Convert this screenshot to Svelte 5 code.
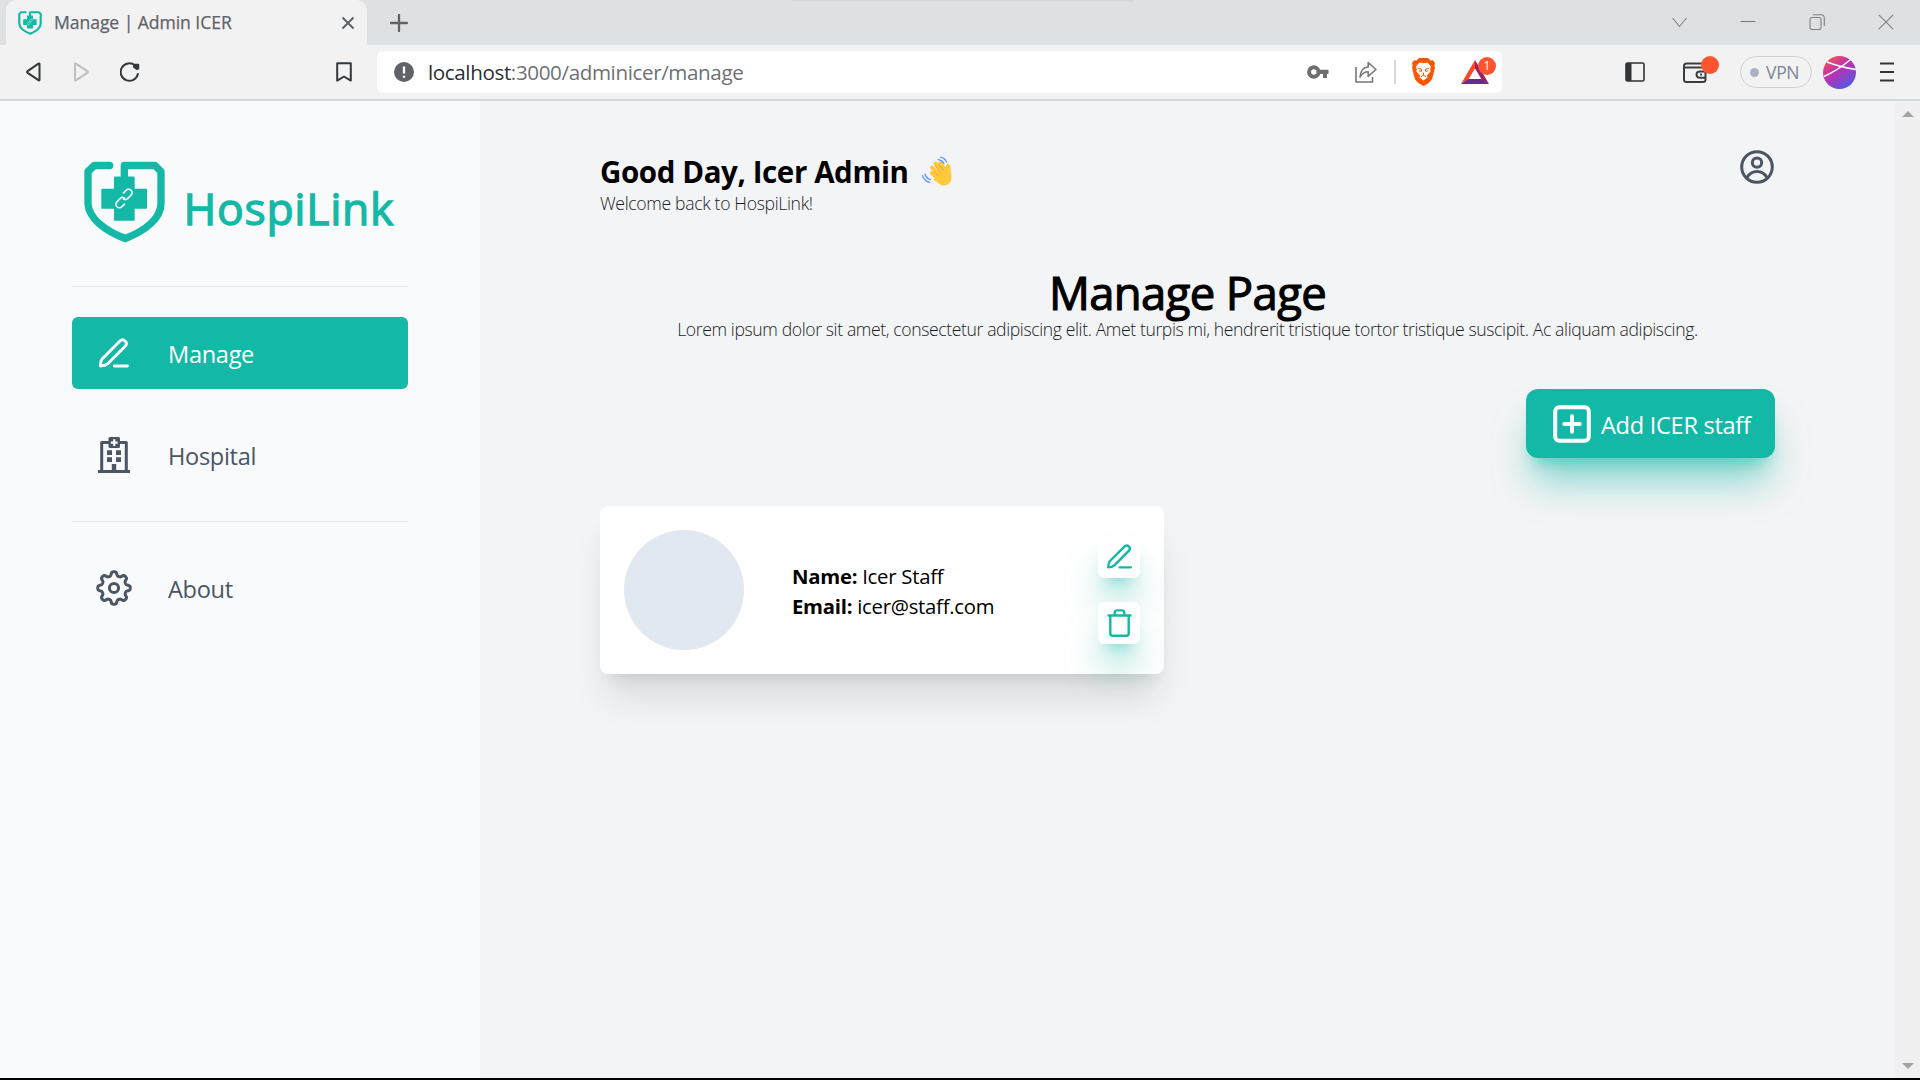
<script>
  const nav = [
    { label: 'Manage', icon: 'edit', active: true },
    { label: 'Hospital', icon: 'hospital', active: false }
  ];

  // Outline of an eight-lobed cog, sampled in polar coordinates.
  function cog(cx, cy, mid, depth) {
    const pts = [];
    for (let i = 0; i < 160; i++) {
      const a = (i / 160) * Math.PI * 2;
      const r = mid + depth * Math.tanh(1.9 * Math.cos(8 * a));
      pts.push(`${(cx + r * Math.sin(a)).toFixed(2)} ${(cy - r * Math.cos(a)).toFixed(2)}`);
    }
    return 'M' + pts.join('L') + 'Z';
  }
  const cogPath = cog(18, 18, 14.3, 2);
</script>

{#snippet shield(cls)}
  <svg class={cls} viewBox="72 62 243 245" fill="none">
    <path d="M149 75H103L84 93V190C86 232 133 270 196 294C257 270 302 234 303 190V93L285 75H193V118" stroke="#14b8a6" stroke-width="22" stroke-linecap="round" stroke-linejoin="round" />
    <path d="M165 108H221Q224 108 224 111V145H258Q261 145 261 148V202Q261 205 258 205H224V238Q224 241 221 241H165Q162 241 162 238V205H127Q124 205 124 202V148Q124 145 127 145H162V111Q162 108 165 108Z" fill="#14b8a6" />
    <g stroke="#f8fafc" stroke-width="5" stroke-linecap="round" transform="rotate(-45 192 174)">
      <path d="M181 187H170A10.500 10.500 0 0 1 170 166H184A10.500 10.500 0 0 1 194 174" />
      <path d="M203 161H214A10.500 10.500 0 0 1 214 182H200A10.500 10.500 0 0 1 190 174" />
    </g>
  </svg>
{/snippet}

{#snippet pen(cls)}
  <svg class={cls} viewBox="0 0 30 30" fill="none" stroke="currentColor" stroke-width="2.900" stroke-linecap="round" stroke-linejoin="round">
    <path d="M1.500 28C1.500 25 1.700 22.500 3.300 20.700L21.200 2.800C24.500 -.2 29.400 4.500 26.400 7.900L8.500 25.900C6.700 27.500 4.500 28 1.500 28Z" />
    <path d="M15.300 28H28.500" />
  </svg>
{/snippet}

<div class="window">
  <header class="tabs">
    <div class="tab">
      {@render shield('favicon')}
      <span class="tab-title">Manage | Admin ICER</span>
      <svg class="tab-close" viewBox="0 0 14 14" stroke="#5f6368" stroke-width="2"><path d="M1.500 1.500L12.500 12.500M12.500 1.500L1.500 12.500" /></svg>
    </div>
    <svg class="new-tab" viewBox="0 0 18 18" stroke="#5f6368" stroke-width="2.300" stroke-linecap="round"><path d="M9 1V17M1 9H17" /></svg>
    <div class="controls">
      <svg viewBox="0 0 16 16"><path d="M1.500 4L8.500 12.500L15.500 4" /></svg>
      <svg viewBox="0 0 16 16"><path d="M.5 7.500H15.500" /></svg>
      <svg viewBox="0 0 16 16"><rect x="1" y="3.500" width="11" height="12" rx="2" /><path d="M4 .8H12Q15.300 .8 15.300 4.200V12" /></svg>
      <svg viewBox="0 0 16 16"><path d="M.8 .8L15.200 15.200M15.200 .8L.8 15.200" /></svg>
    </div>
  </header>

  <div class="toolbar">
    <div class="history">
      <svg viewBox="0 0 20 20" stroke="#35383b"><path d="M14.500 2V18Q14.500 18.700 13.800 18.300L2.300 10.600Q1.700 10 2.300 9.400L13.500 1.600Q14.500 1.200 14.500 2Z" /></svg>
      <svg viewBox="0 0 20 20" stroke="#bfbfbf"><path d="M2 2V18Q2 19 3 18.400L14.500 10.600Q15.200 10 14.500 9.400L3 1.600Q2 1.200 2 2Z" /></svg>
      <svg viewBox="0 0 20 20" stroke="#35383b"><path d="M15 3.400A8.700 8.700 0 1 0 17.900 12" stroke-linecap="round" /><path d="M14.500 2.500H18.500V6.800L16.500 7.200L13.700 5Z" fill="#35383b" stroke-width="1.500" /></svg>
    </div>
    <svg class="bookmark" viewBox="0 0 16 20" fill="none" stroke="#35383b" stroke-width="2"><path d="M1.200 1.200H14.800V18.600L8 14.500L1.200 18.600Z" stroke-linejoin="round" /></svg>
    <div class="address">
      <svg class="info" viewBox="0 0 20 20"><circle cx="10" cy="10" r="10" fill="#5f6368" /><path d="M10 4.500V11.500M10 13.700V15.800" stroke="#fff" stroke-width="2.300" /></svg>
      <span class="url"><b>localhost</b>:3000/adminicer/manage</span>
      <svg class="key" viewBox="0 0 22 14"><path d="M6.800 2.300A4.700 4.700 0 1 0 6.800 11.700A4.700 4.700 0 0 0 6.800 2.300" fill="none" stroke="#6e6e6e" stroke-width="4" /><path d="M11 4.800H21.500V9H20V13H16V9H11Z" fill="#6e6e6e" /></svg>
      <svg class="share" viewBox="0 0 22 22" fill="none" stroke="#777" stroke-width="1.600"><path d="M1 6V21H17.500V16" /><path d="M5 16C5.500 9.500 8.500 6.300 13.200 6V1.500L21 8.500L13.200 15.300V10.800C9.500 10.800 7 12.500 5 16Z" stroke-linejoin="round" /></svg>
      <i class="divider"></i>
      <svg class="brave" viewBox="0 0 24 28">
        <path d="M7.500 0H16.500L19 2.500L21.500 2.200L23.500 5L22.800 8L23.500 9.500C22.500 14 21.500 18.500 20.300 21.500C19 24 15 26.500 12 28C9 26.500 5 24 3.700 21.500C2.500 18.500 1.500 14 .5 9.500L1.200 8L.5 5L2.500 2.200L5 2.500Z" fill="#ff5500" />
        <path d="M12 5.200L16 4.600L19.600 8.400L18.700 11L19 13.500L15.500 17.500L16 19.500L12 22.500L8 19.500L8.500 17.500L5 13.500L5.300 11L4.400 8.400L8 4.600Z" fill="#fff" />
        <path d="M6.200 10L10.300 11.400L9.800 13.400L7.500 12.800M17.800 10L13.700 11.400L14.200 13.400L16.500 12.800M9.500 18.700L12 17.300L14.500 18.700M12 14.500V17.300" fill="none" stroke="#ff5500" stroke-width="1" />
      </svg>
      <div class="rewards">
        <svg viewBox="0 0 28 24"><path d="M14 0L0 24L8 19.500L14 9Z" fill="#ff4724" /><path d="M14 0L28 24L20 19.500L14 9Z" fill="#9e1f63" /><path d="M0 24H28L20.500 19H7.500Z" fill="#662d91" /><path d="M14 8.500L7.700 19H20.300Z" fill="#fff" /></svg>
        <span class="badge">1</span>
      </div>
    </div>
    <div class="extras">
      <svg class="panel" viewBox="0 0 20 20"><rect x="1" y="1" width="18" height="18" rx="1.500" fill="none" stroke="#303438" stroke-width="1.600" /><path d="M1 1H6.500V19H1Z" fill="#303438" /></svg>
      <div class="wallet">
        <svg viewBox="0 0 24 21" fill="none" stroke="#3b3e41" stroke-width="2"><rect x="1" y="1.500" width="21.500" height="18.500" rx="2.500" /><path d="M1 5.500H22.500M23 9.500H17Q13.500 9.500 13.500 12.500Q13.500 15.700 17 15.700H23M17 12.600H19" /></svg>
        <i class="dot"></i>
      </div>
      <div class="vpn"><i></i><span>VPN</span></div>
      <svg class="avatar" viewBox="0 0 33 33">
        <defs><linearGradient id="sphere" x1="0.1" y1="0" x2="0.8" y2="1"><stop offset="0" stop-color="#fb5a3e" /><stop offset=".42" stop-color="#c22fb0" /><stop offset="1" stop-color="#4a5be6" /></linearGradient></defs>
        <circle cx="16.500" cy="16.500" r="16.500" fill="url(#sphere)" />
        <path d="M4 6Q17 11 33 13.500M1 20.500Q15 14 27 4" fill="none" stroke="#fff" stroke-width="1.600" />
      </svg>
      <svg class="menu" viewBox="0 0 14 20" stroke="#303438" stroke-width="2.200"><path d="M0 1.500H14M0 10H14M0 18.500H14" /></svg>
    </div>
  </div>

  <div class="page">
    <aside>
      <div class="brand">
        {@render shield('logo')}
        <span>HospiLink</span>
      </div>
      <hr />
      <nav>
        {#each nav as item}
          <div class="item" class:active={item.active}>
            <span class="glyph">
              {#if item.icon === 'edit'}
                {@render pen('nav-pen')}
              {:else}
                <svg class="building" viewBox="0 0 32 36">
                  <path d="M0 33H2.200V5.500Q2.200 4 3.700 4H28.300Q29.800 4 29.800 5.500V33H32V36H0ZM5.200 7V33H13.800V27H18.200V33H26.800V7Z" fill="currentColor" fill-rule="evenodd" />
                  <rect x="10.500" y="0" width="11.500" height="11" rx="1.500" fill="currentColor" />
                  <path d="M16.200 2.300V9M12.800 5.700H19.600" stroke="#f8fafc" stroke-width="2.200" />
                  <path d="M9 13.200H14V18H9ZM18 13.200H23V18H18ZM9 20.200H14V25H9ZM18 20.200H23V25H18Z" fill="currentColor" />
                </svg>
              {/if}
            </span>
            <span class="label">{item.label}</span>
          </div>
        {/each}
      </nav>
      <hr />
      <div class="item about">
        <span class="glyph">
          <svg class="cog" viewBox="0 0 36 36" fill="none" stroke="currentColor" stroke-width="3"><path d={cogPath} stroke-linejoin="round" /><circle cx="18" cy="18" r="4.600" /></svg>
        </span>
        <span class="label">About</span>
      </div>
    </aside>

    <main>
      <div class="greeting">
        <div>
          <h1><span>Good Day, Icer Admin</span>
            <svg class="wave" viewBox="0 0 32 32" fill="none" stroke-linecap="round">
              <path d="M16 15L24 12L26 8Q29 7 29 12L30.500 20C31 27 26 31 20 29L13 24Z" fill="#ffc83d" />
              <g stroke="#ffc83d" stroke-width="4"><path d="M11 17L18 24" /><path d="M11 11.500L20 20" /><path d="M14.500 7.500L22 17" /><path d="M19.500 7L25 16" /><path d="M27.700 10L27 17" /></g>
              <path d="M12.800 15.500L17 19.500M14.500 10.300L19 15.500M18.300 9L22 14" stroke="#e39d1f" stroke-width=".9" />
              <path d="M17 3.500Q21 4 23 7.500M19.500 1.200Q24 2 25.500 6M4 18Q5 22.500 9.500 23.500M1.500 19.500Q3 25 8.500 26.300" stroke="#5092ff" stroke-width="1.200" />
            </svg>
          </h1>
          <p class="welcome">Welcome back to HospiLink!</p>
        </div>
        <svg class="user" viewBox="0 0 34 34" fill="none" stroke="#4b5563" stroke-width="3"><circle cx="17" cy="17" r="15.300" /><circle cx="17" cy="12.600" r="4.700" /><path d="M7 27.500Q10.500 21.500 17 21.500T27 27.500" /></svg>
      </div>

      <h2>Manage Page</h2>
      <p class="lead">Lorem ipsum dolor sit amet, consectetur adipiscing elit. Amet turpis mi, hendrerit tristique tortor tristique suscipit. Ac aliquam adipiscing.</p>

      <button class="add">
        <svg viewBox="0 0 38 38" fill="none" stroke="#fff" stroke-width="4"><rect x="2.200" y="2.200" width="33.600" height="33.600" rx="4" /><path d="M19 11.300V26.700M11.300 19H26.700" stroke-linecap="round" /></svg>
        <span>Add ICER staff</span>
      </button>

      <article class="card">
        <div class="photo"></div>
        <div class="details">
          <div><b>Name:</b> <span>Icer Staff</span></div>
          <div><b>Email:</b> <span>icer@staff.com</span></div>
        </div>
        <div class="actions">
          <button>{@render pen('card-pen')}</button>
          <button>
            <svg class="trash" viewBox="0 0 25 28" fill="none" stroke="currentColor" stroke-width="2.400" stroke-linecap="round" stroke-linejoin="round"><path d="M1.500 6.500H23.500M3.300 6.500V24.500Q3.300 26.700 5.500 26.700H19.500Q21.700 26.700 21.700 24.500V6.500M7.700 6.500V3.700Q7.700 1.400 10 1.400H15Q17.300 1.400 17.300 3.700V6.500" /></svg>
          </button>
        </div>
      </article>
    </main>

    <div class="scrollbar"><i class="up"></i><i class="down"></i></div>
  </div>
</div>

<style>
  :global(body) { margin: 0; overflow: hidden; background: #000; }
  :global(*) { box-sizing: border-box; }
  .window { width: 1920px; height: 1080px; display: flex; flex-direction: column; font-family: 'Open Sans', 'Noto Sans', sans-serif; color: #000; white-space: nowrap; }
  svg { display: block; flex: none; }
  button { border: 0; padding: 0; font: inherit; }

  .tabs { height: 45px; flex: none; display: flex; align-items: center; background: linear-gradient(#d2d6da, #dde1e4) 792px 0 / 342px 2px no-repeat, #dde1e4; padding-left: 6px; }
  .tab { width: 361px; height: 45px; background: #f2f2f2; border-radius: 10px 10px 0 0; display: flex; align-items: center; padding: 0 12px; }
  .favicon { width: 24px; height: 24px; }
  .tab-title { margin-left: 12px; flex: 1; font-size: 17.6px; color: #5f6368; letter-spacing: -0.07px; -webkit-text-stroke: 0.25px #5f6368; padding-bottom: 1px; }
  .tab-close { width: 14px; height: 14px; }
  .new-tab { width: 18px; height: 18px; margin-left: 23px; }
  .controls { margin-left: auto; padding: 0 26px 2px 0; display: flex; gap: 53px; }
  .controls svg { width: 16px; height: 16px; fill: none; stroke: #7d8185; stroke-width: 1.1; }

  .toolbar { height: 56px; flex: none; display: flex; align-items: center; background: #f2f2f2; border-bottom: 2px solid #d4d9dc; }
  .history { display: flex; gap: 27.5px; margin-left: 25px; width: 311px; }
  .history svg { width: 20px; height: 20px; fill: none; stroke-width: 2; stroke-linejoin: round; }
  .bookmark { width: 16px; height: 20px; }
  .address { margin-left: 25px; width: 1125px; height: 42px; border-radius: 6px; background: #fff; display: flex; align-items: center; padding: 0 6px 0 17px; }
  .info { width: 20px; height: 20px; }
  .url { margin-left: 14px; flex: 1; font-size: 20.6px; color: #6d7175; letter-spacing: -0.38px; }
  .url b { font-weight: 400; color: #2b2e31; }
  .key { width: 22px; height: 14px; }
  .share { width: 22px; height: 22px; margin-left: 26px; }
  .divider { width: 2px; height: 24px; background: #d8dadc; margin: 0 15px 0 17px; }
  .brave { width: 25px; height: 28px; }
  .rewards { position: relative; width: 35px; height: 24px; margin-left: 25px; }
  .rewards svg { width: 28px; height: 24px; }
  .badge { position: absolute; left: 17px; top: -3px; width: 18px; height: 18px; border-radius: 9px; background: #ff5430; color: #fff; font-size: 12px; line-height: 18px; text-align: center; }
  .extras { margin-left: auto; display: flex; align-items: center; padding-right: 26px; }
  .panel { width: 20px; height: 20px; }
  .wallet { position: relative; margin-left: 38px; width: 57px; }
  .wallet svg { width: 24px; height: 21px; }
  .dot { position: absolute; left: 18px; top: -6px; width: 18px; height: 18px; border-radius: 9px; background: #ff5430; }
  .vpn { width: 72px; height: 32px; border: 1.5px solid #cfd2d5; border-radius: 16px; display: flex; align-items: center; padding-left: 9px; gap: 7px; color: #7b8794; font-size: 17.5px; letter-spacing: -0.3px; }
  .vpn i { width: 9px; height: 9px; border-radius: 50%; background: #aeb1c2; }
  .avatar { width: 33px; height: 33px; margin: 0 24px 0 11px; }
  .menu { width: 14px; height: 20px; }

  .page { height: 977px; flex: none; display: flex; background: #f3f4f6; }
  aside { width: 480px; flex: none; background: #f8fafc; padding: 60px 72px 0; }
  .brand { height: 82px; display: flex; padding-left: 12px; color: #14b8a6; }
  .logo { width: 81px; height: 82px; }
  .brand span { margin-left: 18.5px; font-size: 44.5px; -webkit-text-stroke: 1.3px #14b8a6; line-height: 60px; padding-top: 17px; letter-spacing: 0.7px; }
  hr { margin: 0; border: 0; height: 1px; background: #e5e7eb; }
  .brand + hr { margin-top: 43px; }
  nav { padding: 30px 0; display: grid; gap: 30px; }
  .item { height: 72px; border-radius: 6px; display: flex; align-items: center; padding-left: 24px; color: #4b5563; font-size: 23.6px; }
  .item.active { background: #14b8a6; color: #fff; }
  .about { margin-top: 30px; }
  .glyph { width: 36px; display: grid; place-items: center; }
  .label { margin-left: 36px; padding-top: 1px; letter-spacing: -0.32px; }
  .nav-pen { width: 30px; height: 30px; }
  .building { width: 32px; height: 36px; }
  .cog { width: 36px; height: 36px; }

  main { width: 1415px; flex: none; padding: 48px 120px 0; display: flex; flex-direction: column; }
  .greeting { height: 120px; display: flex; justify-content: space-between; }
  h1 { margin: 0; height: 45px; line-height: 45px; font-size: 29.5px; font-weight: 700; letter-spacing: -0.4px; display: flex; align-items: center; gap: 13px; }
  h1 span { width: 308px; }
  .wave { width: 32px; height: 32px; }
  .welcome { margin: 0; color: #1c1c1c; font-size: 17.6px; font-weight: 300; line-height: 18px; letter-spacing: -0.34px; }
  .user { width: 34px; height: 34px; margin: 1px 1px 0 0; }
  h2 { margin: -1px 0 1px; text-align: center; font-size: 45.5px; font-weight: 400; -webkit-text-stroke: 1.1px #000; line-height: 48px; letter-spacing: -0.65px; }
  .lead { margin: 0; color: #1c1c1c; text-align: center; font-size: 17.6px; font-weight: 300; line-height: 24px; letter-spacing: -0.39px; }
  .add { align-self: flex-end; margin-top: 48px; width: 249px; height: 69px; border-radius: 12px; background: #14b8a6; color: #fff; font-size: 23.6px; display: flex; align-items: center; padding-left: 27px; box-shadow: 0 30px 37.5px -7.5px rgba(20, 184, 166, .5), 0 12px 15px -9px rgba(20, 184, 166, .5); }
  .add svg { width: 38px; height: 38px; }
  .add span { margin-left: 10px; padding-top: 3px; letter-spacing: -0.3px; }
  .card { margin-top: 48px; width: 564px; height: 168px; border-radius: 8px; background: #fff; padding: 24px; display: flex; align-items: center; box-shadow: 0 30px 37.5px -7.5px rgba(0, 0, 0, .1), 0 12px 15px -9px rgba(0, 0, 0, .1); }
  .photo { width: 120px; height: 120px; border-radius: 50%; background: #e2e8f0; }
  .details { margin-left: 48px; flex: 1; font-size: 20.3px; line-height: 30px; padding-top: 2px; letter-spacing: -0.25px; }
  .details b { font-weight: 700; }
  .actions { display: grid; gap: 24px; }
  .actions button { width: 42px; height: 42px; border-radius: 6px; background: #fff; color: #14b8a6; display: grid; place-items: center; box-shadow: 0 30px 37.5px -7.5px rgba(20, 184, 166, .5), 0 12px 15px -9px rgba(20, 184, 166, .5); }
  .card-pen { width: 25px; height: 25px; margin-bottom: 2px; }
  .trash { width: 25px; height: 28px; }

  .scrollbar { width: 25px; background: #f0f0f0; display: flex; flex-direction: column; justify-content: space-between; align-items: center; padding: 10px 0 9px; }
  .scrollbar i { border: 6px solid transparent; width: 0; height: 0; }
  .up { border-top: 0 !important; border-bottom-color: #a3a3a3 !important; }
  .down { border-bottom: 0 !important; border-top-color: #a3a3a3 !important; }
</style>
